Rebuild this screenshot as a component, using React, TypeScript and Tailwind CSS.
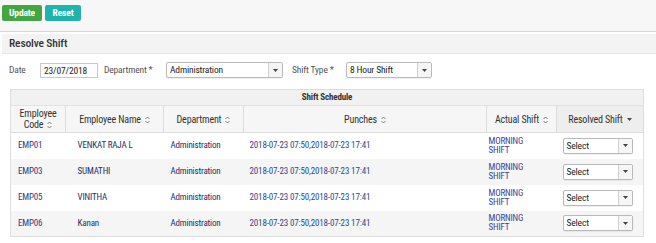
import React from "react";

type Row = {
  code: string;
  name: string;
  department: string;
  punches: string;
  shift: string;
};

const rows: Row[] = [
  { code: "EMP01", name: "VENKAT RAJA L", department: "Administration", punches: "2018-07-23 07:50,2018-07-23 17:41", shift: "MORNING SHIFT" },
  { code: "EMP03", name: "SUMATHI", department: "Administration", punches: "2018-07-23 07:50,2018-07-23 17:41", shift: "MORNING SHIFT" },
  { code: "EMP05", name: "VINITHA", department: "Administration", punches: "2018-07-23 07:50,2018-07-23 17:41", shift: "MORNING SHIFT" },
  { code: "EMP06", name: "Kanan", department: "Administration", punches: "2018-07-23 07:50,2018-07-23 17:41", shift: "MORNING SHIFT" },
];

function SortIcon() {
  return (
    <svg width="5" height="8" viewBox="0 0 5 8" className="inline-block ml-[4px] align-[-1px]">
      <path d="M0.5 3 L2.5 1 L4.5 3" fill="none" stroke="#777" strokeWidth="0.9" />
      <path d="M0.5 5 L2.5 7 L4.5 5" fill="none" stroke="#777" strokeWidth="0.9" />
    </svg>
  );
}

function Caret() {
  return (
    <svg width="5" height="3" viewBox="0 0 5 3" className="inline-block">
      <path d="M0 0 L5 0 L2.5 3 Z" fill="#444" />
    </svg>
  );
}

function SelectBox({ value, width, arrow = 14 }: { value: string; width: number; arrow?: number }) {
  return (
    <div
      className="h-[16px] flex bg-white border border-[#b9b9b9] rounded-[2px] shadow-[0_1px_1px_rgba(0,0,0,0.06)]"
      style={{ width }}
    >
      <div className="flex-1 pl-[3px] text-[9.5px] leading-[14px] text-[#222]">{value}</div>
      <div
        className="flex items-center justify-center border-l border-[#cfcfcf] bg-[#f6f6f6]"
        style={{ width: arrow }}
      >
        <Caret />
      </div>
    </div>
  );
}

export default function App() {
  return (
    <div className="w-[656px] h-[243px] overflow-hidden bg-white font-['Roboto','Liberation_Sans',sans-serif] [font-stretch:75%] tracking-[-0.15px]">
      <div className="h-[32px] bg-[#f7f7f7] border-b border-[#d9d9d9] flex items-start gap-[3px] pl-[2px] pt-[5px]">
        <button className="h-[16px] w-[40px] rounded-[2px] bg-[#43a543] text-white text-[9.5px] font-bold">Update</button>
        <button className="h-[16px] w-[36px] rounded-[2px] bg-[#1fb4ab] text-white text-[9.5px] font-bold">Reset</button>
      </div>

      <div className="mt-[2px] ml-[2px] h-[20px] bg-[#f3f3f3] border-b border-[#e6e6e6] rounded-tl-[3px] flex items-center pl-[7px] text-[11.5px] font-medium text-[#333]">
        Resolve Shift
      </div>

      <div className="mt-[8px] h-[16px] flex items-center pl-[9px] text-[9.5px] text-[#555]">
        <span className="w-[31px]">Date</span>
        <div className="w-[58px] h-[15px] border border-[#c8c8c8] bg-white pl-[3px] leading-[13px] text-[#222]">23/07/2018</div>
        <span className="ml-[6px] w-[62px]">Department *</span>
        <SelectBox value="Administration" width={117} />
        <span className="ml-[9px] w-[54px]">Shift Type *</span>
        <SelectBox value="8 Hour Shift" width={86} />
      </div>

      <table className="mt-[11px] ml-[10px] w-[633px] border-collapse table-fixed border border-[#dedede] text-[9px]">
        <colgroup>
          <col className="w-[55px]" />
          <col className="w-[98px]" />
          <col className="w-[80px]" />
          <col className="w-[243px]" />
          <col className="w-[70px]" />
          <col className="w-[87px]" />
        </colgroup>
        <thead>
          <tr className="h-[16px] bg-[#f1f1f1]">
            <th colSpan={6} className="text-center font-bold text-[#333] text-[9px] border-b border-[#e2e2e2]">
              Shift Schedule
            </th>
          </tr>
          <tr className="h-[27px] bg-[#f6f6f6] text-[10px] leading-[11px] text-[#333]">
            <th className="font-normal border-r border-b border-[#dcdcdc] text-center">
              Employee
              <br />
              Code<SortIcon />
            </th>
            <th className="font-normal border-r border-b border-[#dcdcdc] text-center">
              Employee Name<SortIcon />
            </th>
            <th className="font-normal border-r border-b border-[#dcdcdc] text-center">
              Department<SortIcon />
            </th>
            <th className="font-normal border-r border-b border-[#dcdcdc] text-center">
              Punches<SortIcon />
            </th>
            <th className="font-normal border-r border-b border-[#dcdcdc] text-center">
              Actual Shift<SortIcon />
            </th>
            <th className="font-normal border-b border-[#dcdcdc] text-center bg-[#eeeeee]">
              Resolved Shift <span className="ml-[2px] align-[1px]"><Caret /></span>
            </th>
          </tr>
        </thead>
        <tbody>
          {rows.map((r, i) => (
            <tr key={r.code} className={`h-[26px] ${i % 2 === 1 ? "bg-[#f5f5f5]" : "bg-white"}`}>
              <td className="pl-[7px] text-[#2b3a8c]">{r.code}</td>
              <td className="pl-[12px] text-[#22306a]">{r.name}</td>
              <td className="pl-[7px] text-[#22306a]">{r.department}</td>
              <td className="pl-[6px] text-[#2c4a8f]">{r.punches}</td>
              <td className="pl-[2px] pr-[20px] leading-[9px] text-[#463d8f]">{r.shift}</td>
              <td className="pl-[6px]">
                <SelectBox value="Select" width={70} />
              </td>
            </tr>
          ))}
        </tbody>
      </table>
    </div>
  );
}
